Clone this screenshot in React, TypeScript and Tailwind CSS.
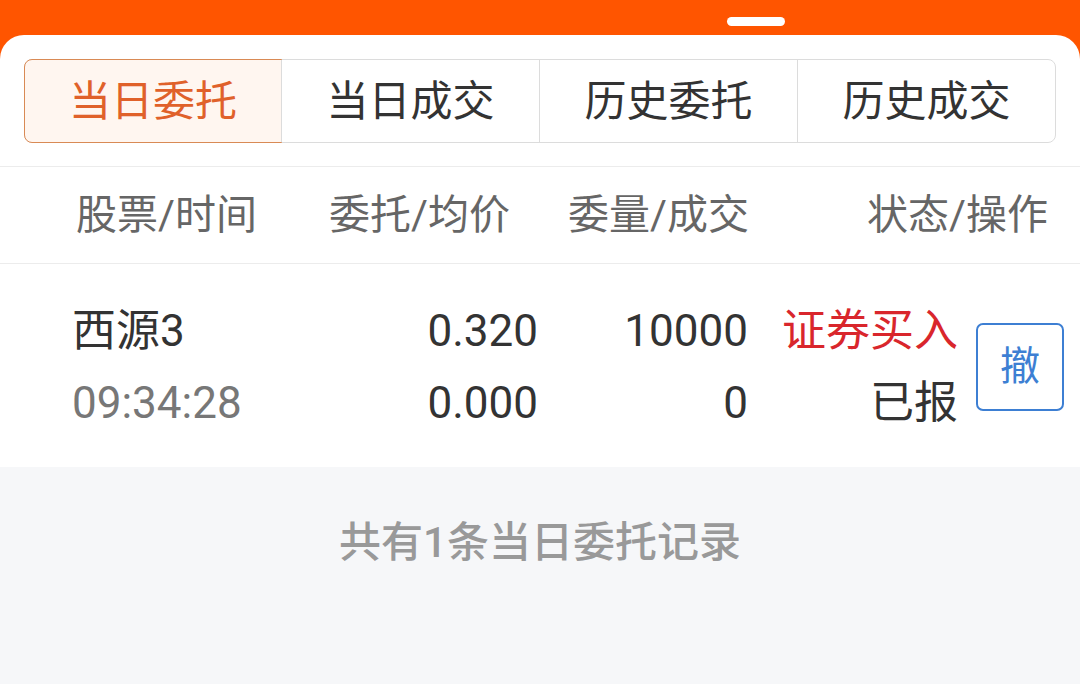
import { useState } from 'react';

const tabs = ['当日委托', '当日成交', '历史委托', '历史成交'];

const font = { fontFamily: 'Roboto, "Noto Sans CJK SC", sans-serif' };

const App = () => {
  const [active, setActive] = useState(0);

  return (
    <div className="flex min-h-[684px] w-[1080px] flex-col bg-[#ff5500]" style={font}>
      <div className="flex h-[35px] pl-[727px] pt-[17px]">
        <div className="h-[9px] w-[58px] rounded-full bg-white" />
      </div>

      <div className="flex flex-1 flex-col overflow-hidden rounded-t-[24px] bg-white">
        <div className="px-[24px] pt-[24px] pb-[23px]">
          <div className="flex h-[84px] rounded-[8px] border border-[#dcdcdc]">
            {tabs.map((t, i) => (
              <button
                key={t}
                type="button"
                onClick={() => setActive(i)}
                className={
                  i === active
                    ? '-m-px flex h-[84px] w-[258px] items-center justify-center rounded-[8px] rounded-r-none border border-[#d98a55] bg-[#fff6f0] text-[42px] text-[#e0612a]'
                    : 'flex flex-1 items-center justify-center border-l border-[#dcdcdc] text-[42px] text-[#333] first:border-l-0'
                }
              >
                {t}
              </button>
            ))}
          </div>
        </div>

        <div className="flex h-[98px] items-center border-y border-[#ececec] pt-[2px] text-[41px] text-[#666]">
          <div className="w-[258px] pl-[76px]">股票/时间</div>
          <div className="w-[252px] text-right">委托/均价</div>
          <div className="w-[239px] text-right">委量/成交</div>
          <div className="flex-1 pr-[32px] text-right">状态/操作</div>
        </div>

        <div className="flex h-[203px] items-center pt-[2px] text-[44px] leading-[72px] text-[#333]">
          <div className="w-[300px] pl-[72px]">
            <div>西源3</div>
            <div className="text-[#777]">09:34:28</div>
          </div>
          <div className="w-[238px] text-right">
            <div>0.320</div>
            <div>0.000</div>
          </div>
          <div className="w-[210px] text-right">
            <div>10000</div>
            <div>0</div>
          </div>
          <div className="w-[210px] text-right">
            <div className="text-[#d9262c]">证券买入</div>
            <div>已报</div>
          </div>
          <button
            type="button"
            className="ml-[18px] flex h-[88px] w-[88px] items-center justify-center rounded-[7px] border-2 border-[#3d7fd3] text-[40px] text-[#3d7fd3]"
          >
            撤
          </button>
        </div>

        <div className="flex flex-1 justify-center bg-[#f6f7f9] pt-[52px]">
          <p className="text-[42px] leading-[48px] font-medium text-[#999]">共有1条当日委托记录</p>
        </div>
      </div>
    </div>
  );
};

export default App;
